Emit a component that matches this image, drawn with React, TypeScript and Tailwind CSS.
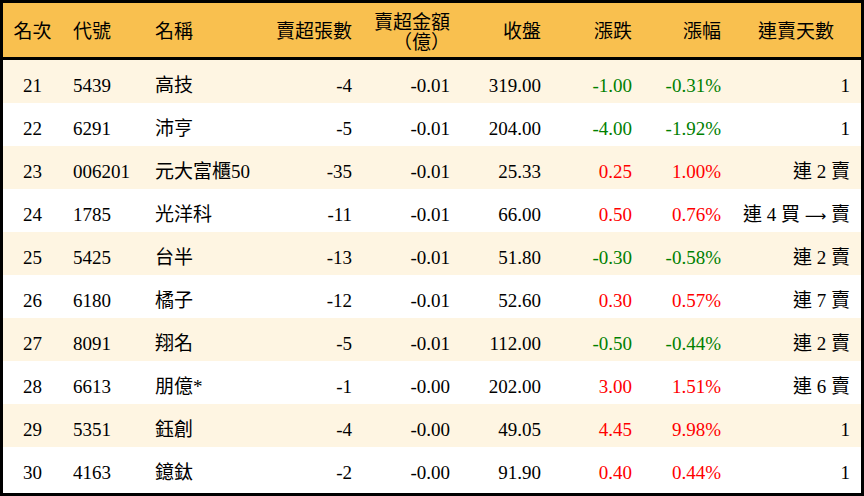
const rows = [
  { rank: 21, code: "5439", name: "高技", lots: "-4", amount: "-0.01", close: "319.00", chg: "-1.00", pct: "-0.31%", days: "1" },
  { rank: 22, code: "6291", name: "沛亨", lots: "-5", amount: "-0.01", close: "204.00", chg: "-4.00", pct: "-1.92%", days: "1" },
  { rank: 23, code: "006201", name: "元大富櫃50", lots: "-35", amount: "-0.01", close: "25.33", chg: "0.25", pct: "1.00%", days: "連 2 賣" },
  { rank: 24, code: "1785", name: "光洋科", lots: "-11", amount: "-0.01", close: "66.00", chg: "0.50", pct: "0.76%", days: "arrow" },
  { rank: 25, code: "5425", name: "台半", lots: "-13", amount: "-0.01", close: "51.80", chg: "-0.30", pct: "-0.58%", days: "連 2 賣" },
  { rank: 26, code: "6180", name: "橘子", lots: "-12", amount: "-0.01", close: "52.60", chg: "0.30", pct: "0.57%", days: "連 7 賣" },
  { rank: 27, code: "8091", name: "翔名", lots: "-5", amount: "-0.01", close: "112.00", chg: "-0.50", pct: "-0.44%", days: "連 2 賣" },
  { rank: 28, code: "6613", name: "朋億*", lots: "-1", amount: "-0.00", close: "202.00", chg: "3.00", pct: "1.51%", days: "連 6 賣" },
  { rank: 29, code: "5351", name: "鈺創", lots: "-4", amount: "-0.00", close: "49.05", chg: "4.45", pct: "9.98%", days: "1" },
  { rank: 30, code: "4163", name: "鐿鈦", lots: "-2", amount: "-0.00", close: "91.90", chg: "0.40", pct: "0.44%", days: "1" },
];

const cols = "grid grid-cols-[59px_83px_125px_92px_98px_91px_91px_89px_130px]";

export default function App() {
  return (
    <div
      className="w-[864px] h-[496px] border-[3px] border-black bg-white text-[19px] leading-[20px] text-black"
      style={{ fontFamily: '"Liberation Serif", "Noto Sans CJK TC", serif' }}
    >
      {/* Header */}
      <div className={`${cols} h-[57px] pt-[4px] bg-[#f9c04f] border-b-[3px] border-black items-center`}>
        <div className="text-center">名次</div>
        <div className="pl-[11px]">代號</div>
        <div className="pl-[10px]">名稱</div>
        <div className="text-right pr-[10px]">賣超張數</div>
        <div className="text-right pr-[10px] pt-[2px]">
          <div>賣超金額</div>
          <div>（億）</div>
        </div>
        <div className="text-right pr-[10px]">收盤</div>
        <div className="text-right pr-[10px]">漲跌</div>
        <div className="text-right pr-[10px]">漲幅</div>
        <div className="text-center">連賣天數</div>
      </div>

      {/* Rows */}
      {rows.map((r, i) => {
        const color = r.chg.startsWith("-") ? "text-[#008000]" : "text-[#ff0000]";
        return (
          <div
            key={r.rank}
            className={`${cols} h-[43px] pt-[9px] items-center whitespace-pre ${i % 2 === 0 ? "bg-[#fef5e2]" : "bg-white"}`}
          >
            <div className="text-center">{r.rank}</div>
            <div className="pl-[11px]">{r.code}</div>
            <div className="pl-[10px]">{r.name}</div>
            <div className="text-right pr-[10px]">{r.lots}</div>
            <div className="text-right pr-[10px]">{r.amount}</div>
            <div className="text-right pr-[10px]">{r.close}</div>
            <div className={`text-right pr-[10px] ${color}`}>{r.chg}</div>
            <div className={`text-right pr-[10px] ${color}`}>{r.pct}</div>
            <div className="text-right pr-[11px]">
              {r.days === "arrow" ? (
                <>
                  {"連 4 買 "}
                  <span className="text-[15px]" style={{ fontFamily: '"DejaVu Sans", sans-serif' }}>⟶</span>
                  {" 賣"}
                </>
              ) : (
                r.days
              )}
            </div>
          </div>
        );
      })}
    </div>
  );
}
